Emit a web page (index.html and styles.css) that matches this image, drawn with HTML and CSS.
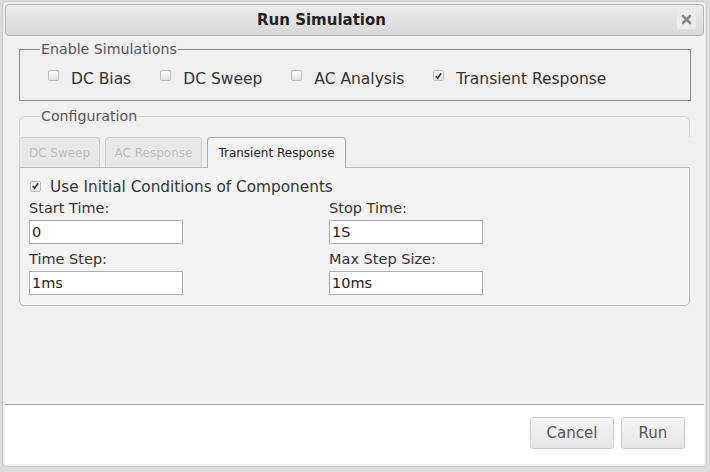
FILE: index.html
```html
<!DOCTYPE html>
<html>
<head>
<meta charset="utf-8">
<link rel="stylesheet" href="styles.css">
</head>
<body>
<div class="dialog">
  <div class="titlebar">
    <span class="title">Run Simulation</span>
    <span class="close">
      <svg width="11" height="11" viewBox="0 0 11 11"><path d="M2 2 L9 9 M9 2 L2 9" stroke="#888" stroke-width="2.6" stroke-linecap="round"/></svg>
    </span>
  </div>
  <div class="content">
    <fieldset class="enable">
      <legend>Enable Simulations</legend>
      <label class="opt"><span class="cb"></span>DC Bias</label>
      <label class="opt"><span class="cb"></span>DC Sweep</label>
      <label class="opt"><span class="cb"></span>AC Analysis</label>
      <label class="opt"><span class="cb checked"><svg width="10" height="10" viewBox="0 0 10 10"><path d="M2 5 L4 7.5 L8 2" stroke="#333" stroke-width="1.8" fill="none"/></svg></span>Transient Response</label>
    </fieldset>
    <fieldset class="config">
      <legend>Configuration</legend>
    </fieldset>
    <div class="tabs">
      <div class="tabbar">
        <span class="tab t1">DC Sweep</span>
        <span class="tab t2">AC Response</span>
        <span class="tab active t3">Transient Response</span>
      </div>
      <div class="panel">
        <label class="ic"><span class="cb checked"><svg width="10" height="10" viewBox="0 0 10 10"><path d="M2 5 L4 7.5 L8 2" stroke="#333" stroke-width="1.8" fill="none"/></svg></span>Use Initial Conditions of Components</label>
        <div class="grid">
          <div class="field"><div class="lbl">Start Time:</div><div class="inp">0</div></div>
          <div class="field"><div class="lbl">Stop Time:</div><div class="inp">1S</div></div>
          <div class="field"><div class="lbl">Time Step:</div><div class="inp">1ms</div></div>
          <div class="field"><div class="lbl">Max Step Size:</div><div class="inp">10ms</div></div>
        </div>
      </div>
    </div>
  </div>
  <div class="buttonpane">
    <span class="btn cancel">Cancel</span>
    <span class="btn run">Run</span>
  </div>
</div>
</body>
</html>
```
FILE: styles.css
```css
html, body {
  margin: 0;
  padding: 0;
}
body {
  width: 710px;
  height: 472px;
  background: #dcdcdc;
  font-family: "DejaVu Sans", Verdana, sans-serif;
  overflow: hidden;
}
.dialog {
  margin: 1px 0 0 2px;
  width: 705px;
  height: 466px;
  box-sizing: border-box;
  border: 1px solid #c8c8c8;
  border-radius: 4px;
  background: #eeeeee;
  padding: 2px;
  display: flex;
  flex-direction: column;
}
.titlebar {
  height: 32px;
  box-sizing: border-box;
  border: 1px solid #b4b4b4;
  border-radius: 4px;
  background: linear-gradient(#ececec, #d8d8d8);
  display: flex;
  align-items: center;
  justify-content: center;
  position: relative;
}
.title {
  font-weight: bold;
  font-size: 15px;
  color: #222;
  margin-left: -66px;
}
.close {
  position: absolute;
  right: 7px;
  top: 5px;
  width: 19px;
  height: 19px;
  border-radius: 2px;
  background: #ececec;
  display: flex;
  align-items: center;
  justify-content: center;
}
.content {
  flex: 1;
  background: #f0f0f0;
  padding: 5px 13px 0 14px;
  color: #333;
}
fieldset {
  margin: 0;
}
legend {
  font-size: 14.2px;
  color: #555;
  padding: 0 1px;
  margin-left: 20px;
}
.enable {
  border: 1px solid #8a8a8a;
  padding: 15px 0 15px 0;
  height: 28px;
  display: flex;
  align-items: center;
}
.opt {
  display: inline-flex;
  align-items: center;
  font-size: 15.5px;
  color: #333;
  margin-right: 29px;
}
.opt:first-of-type {
  margin-left: 28px;
}
.cb {
  width: 11px;
  height: 11px;
  box-sizing: border-box;
  border: 1px solid #bbb;
  border-radius: 2px;
  background: linear-gradient(#fff, #e2e2e2);
  margin-right: 12px;
  display: inline-flex;
  align-items: center;
  justify-content: center;
  position: relative;
  top: -3px;
}
.cb svg {
  display: block;
}
.config {
  margin-top: 7px;
  border: 1px solid #cfcfcf;
  border-bottom: none;
  border-radius: 6px 6px 0 0;
  padding: 0 0 13px;
  margin-right: 1px;
}
.tabs {
  margin-top: 0;
  margin-right: 1px;
}
.tabbar {
  display: flex;
  gap: 5px;
  align-items: flex-end;
}
.tab {
  font-size: 12px;
  color: #bbb;
  background: #e8e8e8;
  border: 1px solid #ccc;
  border-bottom: none;
  border-radius: 4px 4px 0 0;
  height: 30px;
  box-sizing: border-box;
  display: flex;
  align-items: center;
  justify-content: center;
}
.t1 { width: 81px; }
.t2 { width: 97px; }
.t3 { width: 139px; }
.tab.active {
  color: #222;
  background: #f3f3f3;
  border-color: #aaa;
  height: 31px;
  margin-bottom: -1px;
  position: relative;
}
.panel {
  border: 1px solid #b8b8b8;
  border-radius: 0 0 5px 5px;
  background: #f3f3f3;
  height: 139px;
  box-sizing: border-box;
  padding: 9px 0 0 9px;
}
.ic {
  display: flex;
  align-items: center;
  font-size: 15.3px;
  color: #333;
  height: 20px;
}
.ic .cb {
  margin-right: 9px;
  margin-left: 1px;
  top: -1px;
}
.grid {
  display: grid;
  grid-template-columns: 300px 160px;
  column-gap: 0;
  margin-top: 1px;
}
.field {
  height: 51px;
}
.lbl {
  font-size: 14.5px;
  color: #333;
  height: 22px;
  line-height: 20px;
}
.inp {
  width: 154px;
  height: 24px;
  box-sizing: border-box;
  border: 1px solid #aaa;
  background: #fff;
  font-size: 14.5px;
  color: #222;
  padding-left: 2px;
  line-height: 22px;
}
.buttonpane {
  height: 60px;
  background: #fff;
  border-top: 1px solid #a8a8a8;
  display: flex;
  justify-content: flex-end;
  align-items: flex-start;
  padding: 12px 19px 0 0;
  box-sizing: border-box;
  gap: 7px;
}
.btn {
  height: 32px;
  box-sizing: border-box;
  border: 1px solid #ccc;
  border-radius: 3px;
  background: linear-gradient(#f6f6f6, #e6e6e6);
  font-size: 15px;
  color: #555;
  display: flex;
  align-items: center;
  justify-content: center;
}
.cancel { width: 84px; }
.run { width: 64px; }
```
